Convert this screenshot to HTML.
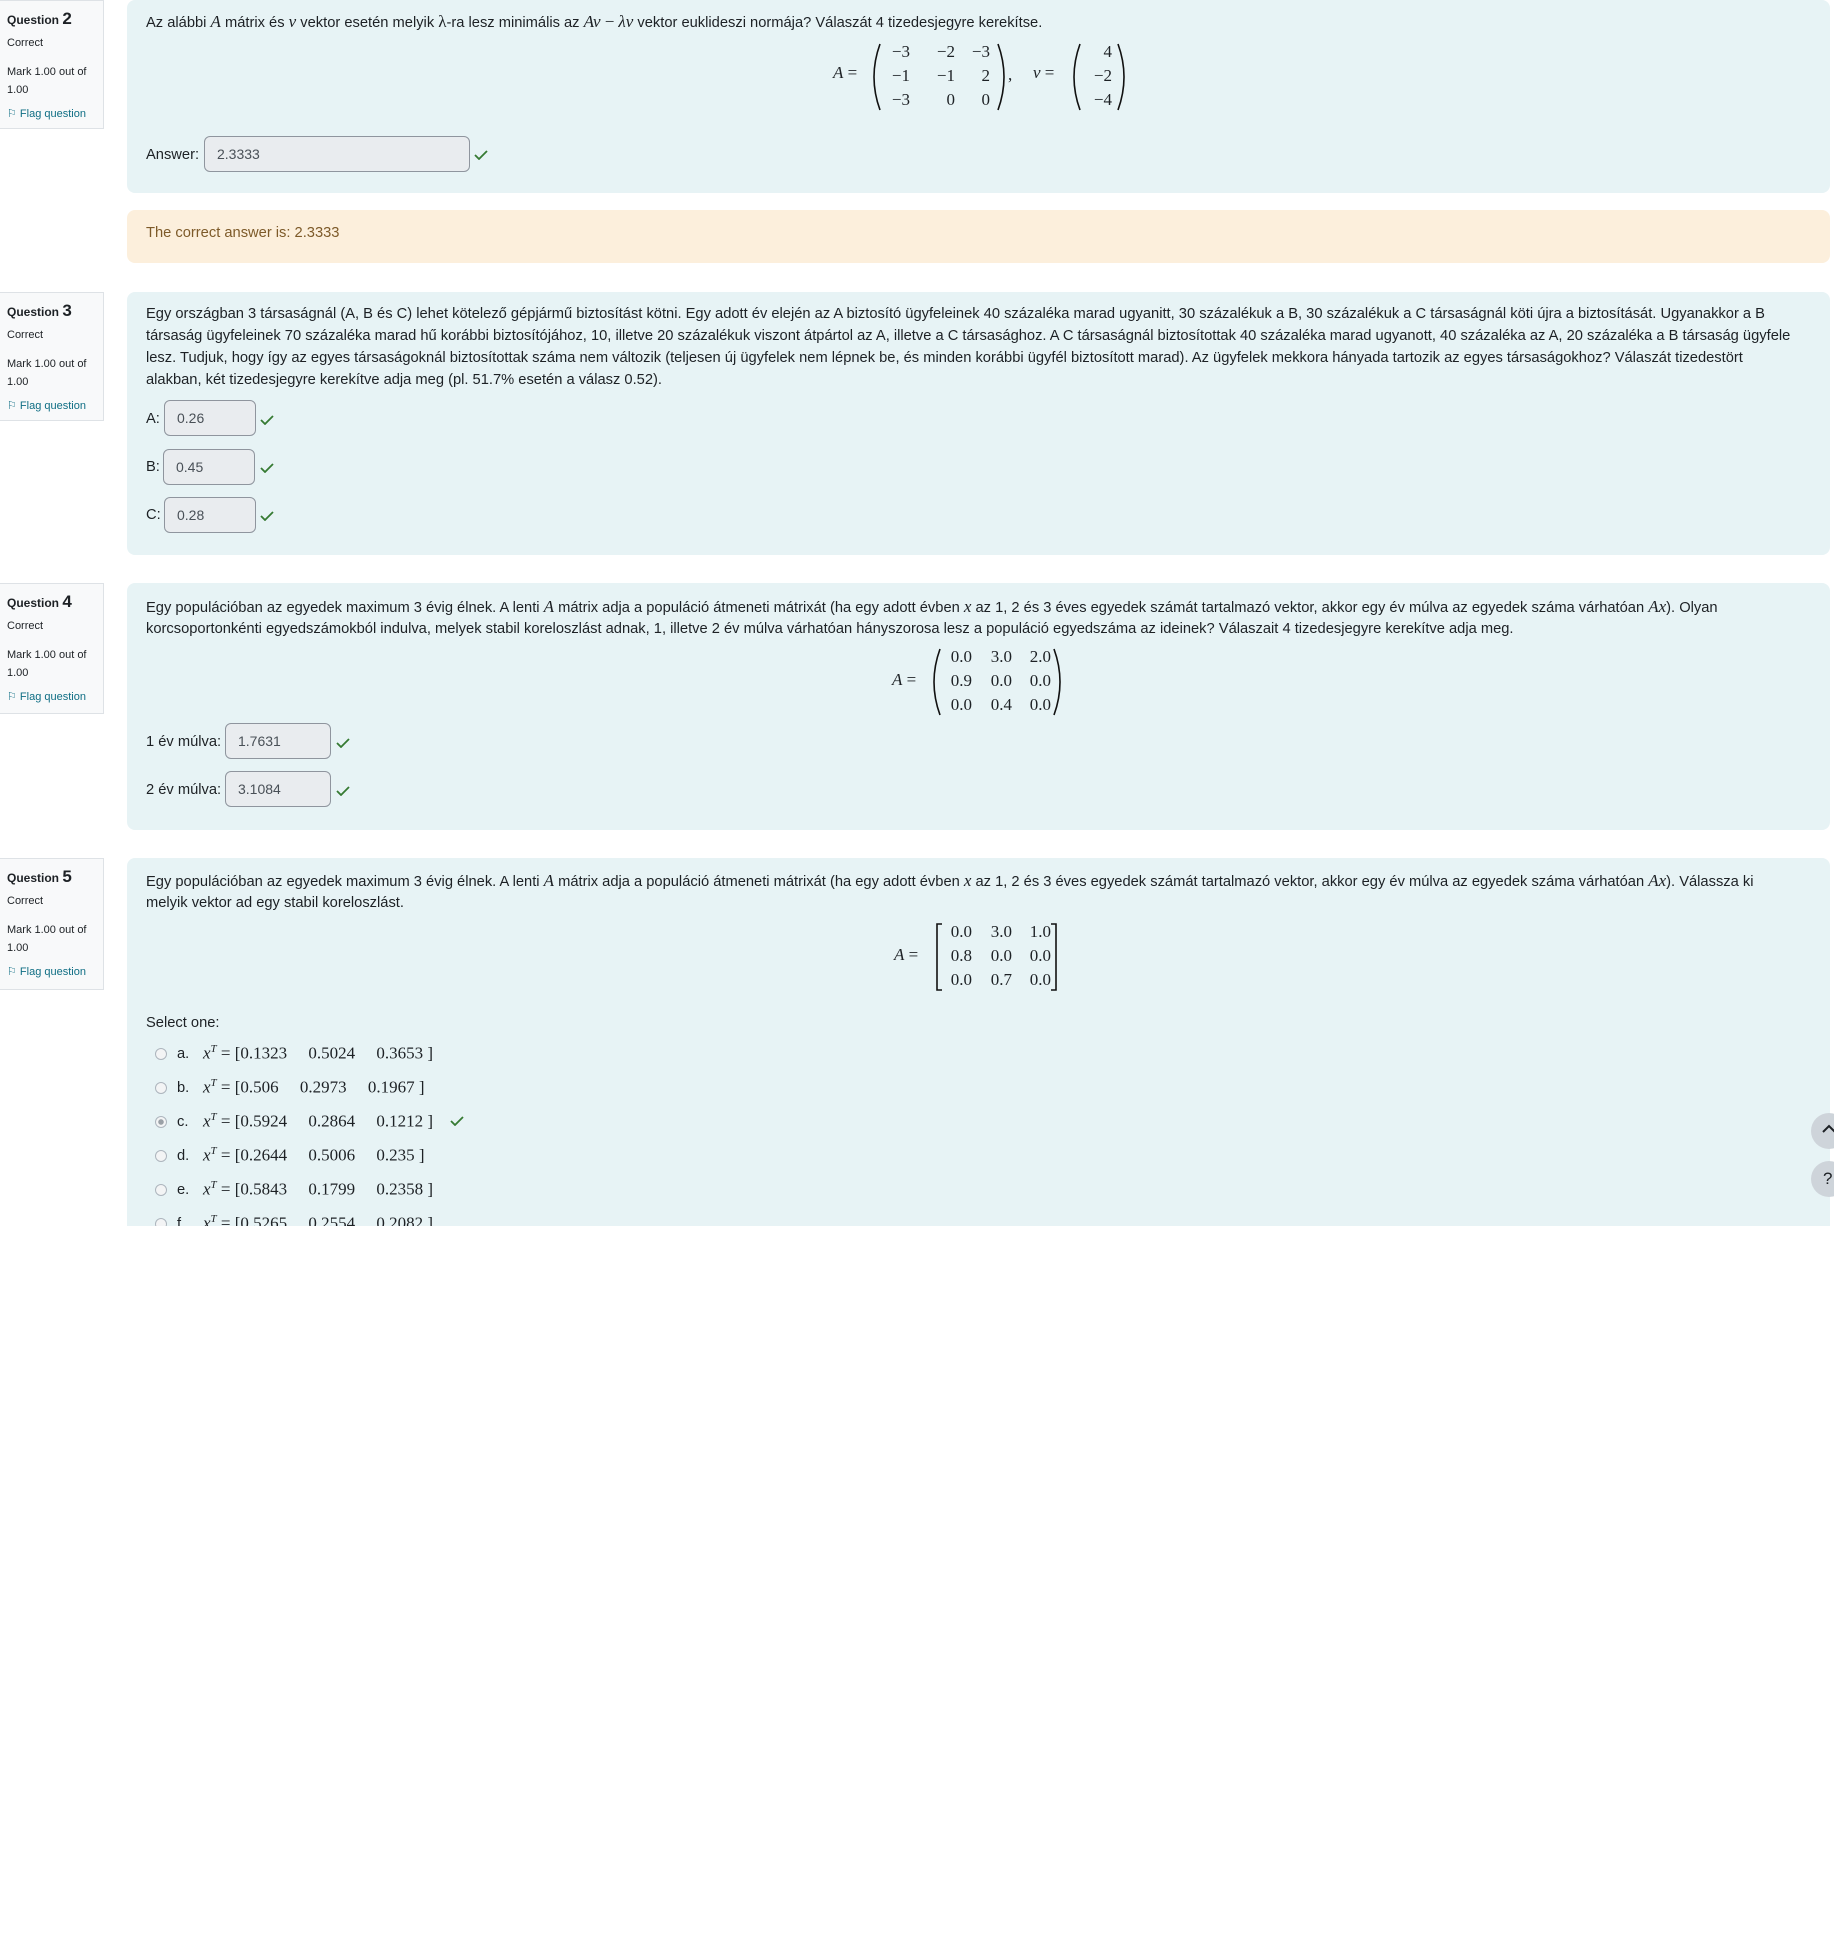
<!DOCTYPE html>
<html><head><meta charset="utf-8">
<style>
body{margin:0;width:1834px;height:1938px;background:#fff;font-family:"Liberation Sans",sans-serif;color:#1d2125;position:relative;overflow:hidden}
.a{position:absolute;white-space:nowrap}
.side{position:absolute;left:0;width:104px;background:#f8f9fa;border:1px solid #dee2e6;border-left:none;box-sizing:border-box;font-size:11px;padding:0 8px}
.side .q{position:absolute;left:7px;top:8px;font-weight:bold;font-size:12px}
.side .q b{font-size:17px}
.side .c{position:absolute;left:7px;top:36px}
.side .m{position:absolute;left:7px;top:62px;line-height:18px}
.side .f{position:absolute;left:7px;top:106px;color:#0f6e84}
.box{position:absolute;left:127px;width:1703px;background:#e7f3f5;border-radius:8px}
.t{font-size:14.7px;line-height:22px}
.inp{position:absolute;background:#e9ecef;border:1px solid #8f959e;border-radius:6px;box-sizing:border-box;font-size:14px;color:#495057;padding-left:12px;display:flex;align-items:center}
.ck{position:absolute;width:14px;height:10px}
.m1{font-family:"Liberation Serif",serif;font-size:17px}
.i{font-style:italic}
.mx{position:absolute;font-family:"Liberation Serif",serif;font-size:17px;text-align:right}
.rad{position:absolute;width:12px;height:12px;border:1px solid #adb5bd;border-radius:50%;background:#f3f4f5;box-sizing:border-box}
</style></head><body>

<!-- Q2 -->
<div class="side" style="top:0;height:129px"><div class="q">Question <b>2</b></div><div class="c">Correct</div><div class="m">Mark 1.00 out of<br>1.00</div><div class="f">⚐ Flag question</div></div>
<div class="box" style="top:0;height:193px"></div>
<div class="a t" style="left:146px;top:11px">Az alábbi <span class="m1 i">A</span> mátrix és <span class="m1 i">v</span> vektor esetén melyik <span class="m1">λ</span>-ra lesz minimális az <span class="m1 i">Av</span> <span class="m1">−</span> <span class="m1 i">λv</span> vektor euklideszi normája? Válaszát 4 tizedesjegyre kerekítse.</div>
<div class="a m1" style="left:833px;top:63px"><span class="i">A</span> =</div>
<svg class="a" style="left:870px;top:42px" width="260" height="70"><path d="M10 2 Q-2 35 10 68" fill="none" stroke="#111" stroke-width="1.6"/><path d="M128 2 Q140 35 128 68" fill="none" stroke="#111" stroke-width="1.6"/><path d="M210 2 Q198 35 210 68" fill="none" stroke="#111" stroke-width="1.6"/><path d="M248 2 Q260 35 248 68" fill="none" stroke="#111" stroke-width="1.6"/></svg>
<div class="mx" style="left:880px;top:40px;width:30px;line-height:24px">−3<br>−1<br>−3</div>
<div class="mx" style="left:925px;top:40px;width:30px;line-height:24px">−2<br>−1<br>0</div>
<div class="mx" style="left:960px;top:40px;width:30px;line-height:24px">−3<br>2<br>0</div>
<div class="a m1" style="left:1008px;top:65px">,</div>
<div class="a m1" style="left:1033px;top:63px"><span class="i">v</span> =</div>
<div class="mx" style="left:1080px;top:40px;width:32px;line-height:24px">4<br>−2<br>−4</div>
<div class="a t" style="left:146px;top:144px">Answer:</div>
<div class="inp" style="left:204px;top:136px;width:266px;height:36px">2.3333</div>
<svg class="ck" style="left:474px;top:150px" viewBox="0 0 14 10"><path d="M1 5 L5 9 L13 1" fill="none" stroke="#357a32" stroke-width="1.8"/></svg>
<div class="box" style="top:210px;height:53px;background:#fcefdc"></div>
<div class="a t" style="left:146px;top:222px;color:#7d5a29">The correct answer is: 2.3333</div>

<!-- Q3 -->
<div class="side" style="top:292px;height:129px"><div class="q">Question <b>3</b></div><div class="c">Correct</div><div class="m">Mark 1.00 out of<br>1.00</div><div class="f">⚐ Flag question</div></div>
<div class="box" style="top:292px;height:263px"></div>
<div class="a t" style="left:146px;top:303px">Egy országban 3 társaságnál (A, B és C) lehet kötelező gépjármű biztosítást kötni. Egy adott év elején az A biztosító ügyfeleinek 40 százaléka marad ugyanitt, 30 százalékuk a B, 30 százalékuk a C társaságnál köti újra a biztosítását. Ugyanakkor a B</div>
<div class="a t" style="left:146px;top:325px">társaság ügyfeleinek 70 százaléka marad hű korábbi biztosítójához, 10, illetve 20 százalékuk viszont átpártol az A, illetve a C társasághoz. A C társaságnál biztosítottak 40 százaléka marad ugyanott, 40 százaléka az A, 20 százaléka a B társaság ügyfele</div>
<div class="a t" style="left:146px;top:347px">lesz. Tudjuk, hogy így az egyes társaságoknál biztosítottak száma nem változik (teljesen új ügyfelek nem lépnek be, és minden korábbi ügyfél biztosított marad). Az ügyfelek mekkora hányada tartozik az egyes társaságokhoz? Válaszát tizedestört</div>
<div class="a t" style="left:146px;top:369px">alakban, két tizedesjegyre kerekítve adja meg (pl. 51.7% esetén a válasz 0.52).</div>
<div class="a t" style="left:146px;top:408px">A:</div><div class="inp" style="left:164px;top:400px;width:92px;height:36px">0.26</div>
<svg class="ck" style="left:260px;top:415px" viewBox="0 0 14 10"><path d="M1 5 L5 9 L13 1" fill="none" stroke="#357a32" stroke-width="1.8"/></svg>
<div class="a t" style="left:146px;top:456px">B:</div><div class="inp" style="left:163px;top:449px;width:92px;height:36px">0.45</div>
<svg class="ck" style="left:260px;top:463px" viewBox="0 0 14 10"><path d="M1 5 L5 9 L13 1" fill="none" stroke="#357a32" stroke-width="1.8"/></svg>
<div class="a t" style="left:146px;top:504px">C:</div><div class="inp" style="left:164px;top:497px;width:92px;height:36px">0.28</div>
<svg class="ck" style="left:260px;top:511px" viewBox="0 0 14 10"><path d="M1 5 L5 9 L13 1" fill="none" stroke="#357a32" stroke-width="1.8"/></svg>

<!-- Q4 -->
<div class="side" style="top:583px;height:131px"><div class="q">Question <b>4</b></div><div class="c">Correct</div><div class="m">Mark 1.00 out of<br>1.00</div><div class="f">⚐ Flag question</div></div>
<div class="box" style="top:583px;height:247px"></div>
<div class="a t" style="left:146px;top:596px">Egy populációban az egyedek maximum 3 évig élnek. A lenti <span class="m1 i">A</span> mátrix adja a populáció átmeneti mátrixát (ha egy adott évben <span class="m1 i">x</span> az 1, 2 és 3 éves egyedek számát tartalmazó vektor, akkor egy év múlva az egyedek száma várhatóan <span class="m1 i">Ax</span>). Olyan</div>
<div class="a t" style="left:146px;top:618px">korcsoportonkénti egyedszámokból indulva, melyek stabil koreloszlást adnak, 1, illetve 2 év múlva várhatóan hányszorosa lesz a populáció egyedszáma az ideinek? Válaszait 4 tizedesjegyre kerekítve adja meg.</div>
<div class="a m1" style="left:892px;top:670px"><span class="i">A</span> =</div>
<svg class="a" style="left:930px;top:647px" width="135" height="70"><path d="M10 2 Q-2 35 10 68" fill="none" stroke="#111" stroke-width="1.6"/><path d="M124 2 Q136 35 124 68" fill="none" stroke="#111" stroke-width="1.6"/></svg>
<div class="mx" style="left:942px;top:645px;width:30px;line-height:24px">0.0<br>0.9<br>0.0</div>
<div class="mx" style="left:982px;top:645px;width:30px;line-height:24px">3.0<br>0.0<br>0.4</div>
<div class="mx" style="left:1021px;top:645px;width:30px;line-height:24px">2.0<br>0.0<br>0.0</div>
<div class="a t" style="left:146px;top:731px">1 év múlva:</div><div class="inp" style="left:225px;top:723px;width:106px;height:36px">1.7631</div>
<svg class="ck" style="left:336px;top:738px" viewBox="0 0 14 10"><path d="M1 5 L5 9 L13 1" fill="none" stroke="#357a32" stroke-width="1.8"/></svg>
<div class="a t" style="left:146px;top:779px">2 év múlva:</div><div class="inp" style="left:225px;top:771px;width:106px;height:36px">3.1084</div>
<svg class="ck" style="left:336px;top:786px" viewBox="0 0 14 10"><path d="M1 5 L5 9 L13 1" fill="none" stroke="#357a32" stroke-width="1.8"/></svg>

<!-- Q5 -->
<div class="side" style="top:858px;height:132px"><div class="q">Question <b>5</b></div><div class="c">Correct</div><div class="m">Mark 1.00 out of<br>1.00</div><div class="f">⚐ Flag question</div></div>
<div class="box" style="top:858px;height:368px;border-radius:8px 8px 0 0"></div>
<div class="a t" style="left:146px;top:870px">Egy populációban az egyedek maximum 3 évig élnek. A lenti <span class="m1 i">A</span> mátrix adja a populáció átmeneti mátrixát (ha egy adott évben <span class="m1 i">x</span> az 1, 2 és 3 éves egyedek számát tartalmazó vektor, akkor egy év múlva az egyedek száma várhatóan <span class="m1 i">Ax</span>). Válassza ki</div>
<div class="a t" style="left:146px;top:892px">melyik vektor ad egy stabil koreloszlást.</div>
<div class="a m1" style="left:894px;top:945px"><span class="i">A</span> =</div>
<svg class="a" style="left:934px;top:922px" width="126" height="70"><path d="M8 2 H3 V68 H8" fill="none" stroke="#111" stroke-width="1.6"/><path d="M117 2 H122 V68 H117" fill="none" stroke="#111" stroke-width="1.6"/></svg>
<div class="mx" style="left:942px;top:920px;width:30px;line-height:24px">0.0<br>0.8<br>0.0</div>
<div class="mx" style="left:982px;top:920px;width:30px;line-height:24px">3.0<br>0.0<br>0.7</div>
<div class="mx" style="left:1021px;top:920px;width:30px;line-height:24px">1.0<br>0.0<br>0.0</div>
<div class="a t" style="left:146px;top:1012px">Select one:</div>
<div style="position:absolute;left:0;top:1040px;width:1834px;height:186px;overflow:hidden">
 <div class="rad" style="left:155px;top:8px"></div><div class="a t" style="left:177px;top:3px">a.</div><div class="a m1" style="left:203px;top:3px"><span class="i">x</span><sup style="font-size:11px" class="i">T</sup> = [0.1323&nbsp;&nbsp;&nbsp;&nbsp;&nbsp;0.5024&nbsp;&nbsp;&nbsp;&nbsp;&nbsp;0.3653 ]</div>
 <div class="rad" style="left:155px;top:42px"></div><div class="a t" style="left:177px;top:37px">b.</div><div class="a m1" style="left:203px;top:37px"><span class="i">x</span><sup style="font-size:11px" class="i">T</sup> = [0.506&nbsp;&nbsp;&nbsp;&nbsp;&nbsp;0.2973&nbsp;&nbsp;&nbsp;&nbsp;&nbsp;0.1967 ]</div>
 <div class="rad" style="left:155px;top:76px;background:radial-gradient(circle,#9aa0a6 2.5px,#f3f4f5 3px)"></div><div class="a t" style="left:177px;top:71px">c.</div><div class="a m1" style="left:203px;top:71px"><span class="i">x</span><sup style="font-size:11px" class="i">T</sup> = [0.5924&nbsp;&nbsp;&nbsp;&nbsp;&nbsp;0.2864&nbsp;&nbsp;&nbsp;&nbsp;&nbsp;0.1212 ]</div>
 <svg class="ck" style="left:450px;top:76px" viewBox="0 0 14 10"><path d="M1 5 L5 9 L13 1" fill="none" stroke="#357a32" stroke-width="1.8"/></svg>
 <div class="rad" style="left:155px;top:110px"></div><div class="a t" style="left:177px;top:105px">d.</div><div class="a m1" style="left:203px;top:105px"><span class="i">x</span><sup style="font-size:11px" class="i">T</sup> = [0.2644&nbsp;&nbsp;&nbsp;&nbsp;&nbsp;0.5006&nbsp;&nbsp;&nbsp;&nbsp;&nbsp;0.235 ]</div>
 <div class="rad" style="left:155px;top:144px"></div><div class="a t" style="left:177px;top:139px">e.</div><div class="a m1" style="left:203px;top:139px"><span class="i">x</span><sup style="font-size:11px" class="i">T</sup> = [0.5843&nbsp;&nbsp;&nbsp;&nbsp;&nbsp;0.1799&nbsp;&nbsp;&nbsp;&nbsp;&nbsp;0.2358 ]</div>
 <div class="rad" style="left:155px;top:178px"></div><div class="a t" style="left:177px;top:173px">f.</div><div class="a m1" style="left:203px;top:173px"><span class="i">x</span><sup style="font-size:11px" class="i">T</sup> = [0.5265&nbsp;&nbsp;&nbsp;&nbsp;&nbsp;0.2554&nbsp;&nbsp;&nbsp;&nbsp;&nbsp;0.2082 ]</div>
</div>

<div style="position:absolute;left:1811px;top:1113px;width:36px;height:36px;border-radius:50%;background:#ced4da"></div>
<svg class="a" style="left:1822px;top:1124px" width="14" height="10"><path d="M1 8 L7 2 L13 8" fill="none" stroke="#1d2125" stroke-width="2"/></svg>
<div style="position:absolute;left:1811px;top:1161px;width:36px;height:36px;border-radius:50%;background:#ced4da"></div>
<div class="a" style="left:1823px;top:1169px;font-size:17px;color:#1d2125">?</div>
</body></html>
